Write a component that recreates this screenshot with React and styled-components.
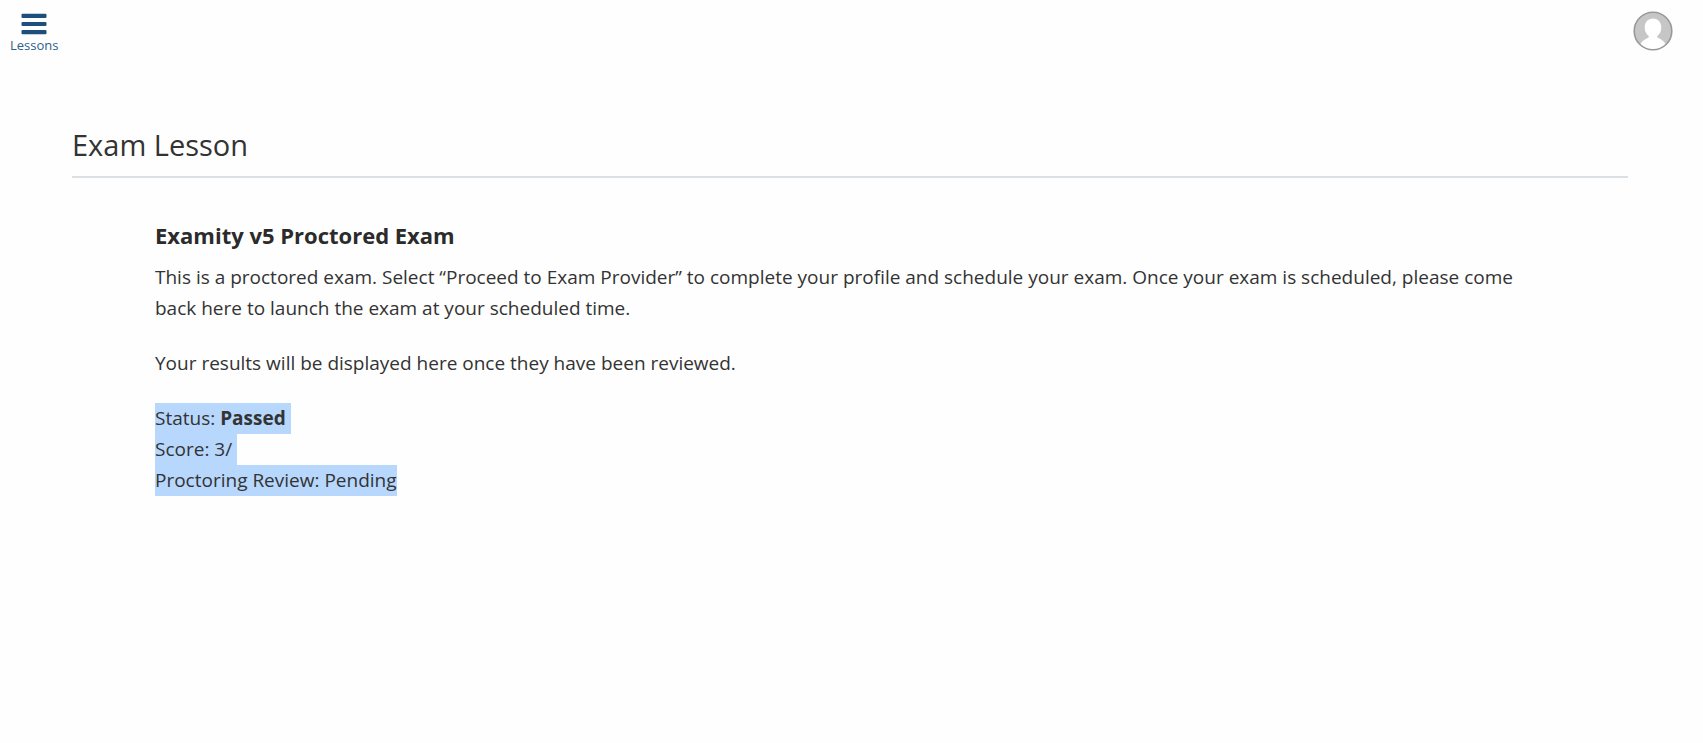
import React from "react";
import styled, { createGlobalStyle } from "styled-components";

const GlobalStyle = createGlobalStyle`
  * { box-sizing: border-box; }
  body { margin: 0; background: #fefefe; color: #333; font: 19px/31px "Open Sans", sans-serif; }
`;
const TopBar = styled.header`
  display: flex;
  justify-content: space-between;
  align-items: flex-start;
  padding: 11px 30px 0 10px;
`;
const LessonsButton = styled.button`
  display: flex;
  flex-direction: column;
  align-items: center;
  gap: 1px;
  padding: 2px 0 0;
  border: 0;
  background: none;
  color: #2b5f8c;
  font: 13px/18px "Open Sans", sans-serif;
  cursor: pointer;
`;
const AvatarButton = styled.button`
  display: flex;
  padding: 0;
  border: 0;
  background: none;
  cursor: pointer;
`;
const Main = styled.main`
  padding: 71px 75px 24px 72px;
`;
const PageTitle = styled.h1`
  margin: 0;
  padding-bottom: 11px;
  border-bottom: 2px solid #dbe0e4;
  font-size: 29px;
  line-height: 40px;
  font-weight: 400;
`;
const Content = styled.section`
  padding: 42px 83px 0;
`;
const ExamTitle = styled.h2`
  margin: 0 0 11px;
  color: #2b2b2b;
  font-size: 22px;
  line-height: 31px;
  font-weight: 700;
`;
const Paragraph = styled.p`
  margin: 0 0 24px;
`;
const Results = styled.div`
  display: flex;
  flex-direction: column;
  align-items: flex-start;
`;
const ResultLine = styled.div`
  padding-right: ${(p) => (p.$last ? 0 : 5)}px;
  background: #b7d7fd;
`;

export default function App() {
  return (
    <>
      <GlobalStyle />
      <TopBar>
        <LessonsButton>
          <svg width="26" height="22" viewBox="0 0 26 22" fill="#1b4f7c" aria-hidden="true">
            <rect x="0.5" y="0.7" width="25" height="4.2" rx="1" />
            <rect x="0.5" y="8.9" width="25" height="4.2" rx="1" />
            <rect x="0.5" y="17.1" width="25" height="4.2" rx="1" />
          </svg>
          Lessons
        </LessonsButton>
        <AvatarButton aria-label="Account">
          <svg width="40" height="40" viewBox="0 0 40 40" aria-hidden="true">
            <circle cx="20" cy="20" r="18.8" fill="#c6c6c6" />
            <path d="M20 7.500c-5 0-8.300 3.800-8.300 8.800 0 4.200 1.600 7 4 8.800v1.300C12 28 9 30 7 33.600 14 40.500 26 40.500 33 33.600 31 30 28 28 24.300 26.400v-1.300c2.400-1.800 4-4.600 4-8.800 0-5-3.300-8.800-8.300-8.800Z" fill="#fff" />
            <circle cx="20" cy="20" r="18.8" fill="none" stroke="#999" strokeWidth="1.6" />
          </svg>
        </AvatarButton>
      </TopBar>
      <Main>
        <PageTitle>Exam Lesson</PageTitle>
        <Content>
          <ExamTitle>Examity v5 Proctored Exam</ExamTitle>
          <Paragraph>
            This is a proctored exam. Select “Proceed to Exam Provider” to complete your profile and schedule your exam. Once your exam is scheduled, please come back here to launch the exam at your scheduled time.
          </Paragraph>
          <Paragraph>Your results will be displayed here once they have been reviewed.</Paragraph>
          <Results>
            <ResultLine>Status: <strong>Passed</strong></ResultLine>
            <ResultLine>Score: 3/</ResultLine>
            <ResultLine $last>Proctoring Review: Pending</ResultLine>
          </Results>
        </Content>
      </Main>
    </>
  );
}
